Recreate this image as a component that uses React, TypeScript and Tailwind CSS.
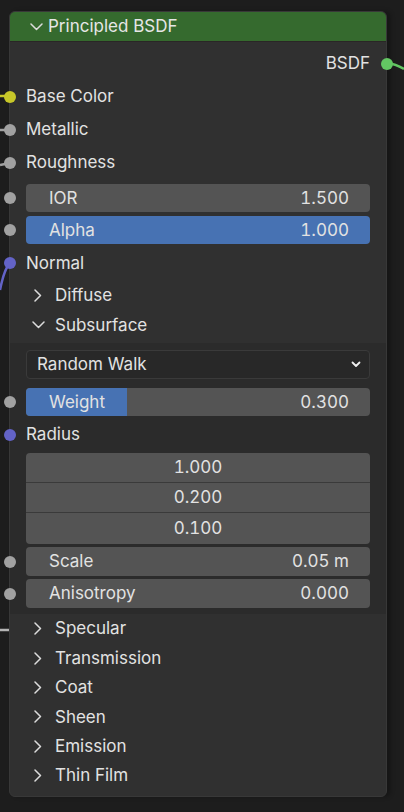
import React from "react";

const SOCKET = {
  yellow: "bg-[#c7c729]",
  gray: "bg-[#a1a1a1]",
  purple: "bg-[#6363c7]",
  green: "bg-[#63c763]",
};

function Socket({ color, side = "left" }: { color: string; side?: "left" | "right" }) {
  return (
    <span
      className={`absolute top-1/2 -translate-y-1/2 w-[12px] h-[12px] rounded-full ${color} ${side === "left" ? "left-[-6px]" : "right-[-7px]"}`}
    />
  );
}

function ChevronDown({ className = "" }: { className?: string }) {
  return (
    <svg width="13" height="8" viewBox="0 0 13 8" className={`shrink-0 ${className}`}>
      <polyline points="1,1 6.5,6.5 12,1" fill="none" stroke="#dcdcdc" strokeWidth="1.5" strokeLinecap="round" strokeLinejoin="round" />
    </svg>
  );
}

function ChevronRight() {
  return (
    <svg width="8" height="13" viewBox="0 0 8 13" className="shrink-0">
      <polyline points="1,1 6.5,6.5 1,12" fill="none" stroke="#dcdcdc" strokeWidth="1.5" strokeLinecap="round" strokeLinejoin="round" />
    </svg>
  );
}

function SocketRow({ label, color }: { label: string; color: string }) {
  return (
    <div className="relative h-[33px] flex items-center px-[16px] pt-[1px]">
      <Socket color={color} />
      <span>{label}</span>
    </div>
  );
}

function Field({ label, value, socket, active }: { label: string; value: string; socket?: string; active?: boolean }) {
  return (
    <div className="relative px-[16px]">
      {socket && <Socket color={socket} />}
      <div className={`h-[28px] rounded-[4px] flex items-center justify-between pl-[23px] pr-[21px] pt-[1px] ${active ? "bg-[#4772b3]" : "bg-[#545454]"}`}>
        <span>{label}</span>
        <span className="tabular-nums">{value}</span>
      </div>
    </div>
  );
}

function PanelHeader({ label, open, h = "h-[29.4px]" }: { label: string; open?: boolean; h?: string }) {
  return (
    <div className={`${h} flex items-center pl-[24px]`}>
      <span className="w-[8px] flex justify-center">{open ? <ChevronDown /> : <ChevronRight />}</span>
      <span className="ml-[13px] pt-[1px]">{label}</span>
    </div>
  );
}

export default function App() {
  const closedPanels = ["Specular", "Transmission", "Coat", "Sheen", "Emission", "Thin Film"];

  return (
    <div className="relative w-[404px] h-[812px] bg-[#1d1d1d] overflow-hidden pt-[11px] pl-[9px] font-['Inter','Noto_Sans',sans-serif] text-[17px] text-[#e2e2e2]">
      {/* wires */}
      <svg className="absolute inset-0" width="404" height="812">
        <line x1="0" y1="96" x2="10" y2="96" stroke="#c7c729" strokeWidth="2.5" />
        <line x1="0" y1="130" x2="10" y2="130" stroke="#a1a1a1" strokeWidth="2.5" />
        <path d="M0 165 L10 163" stroke="#a1a1a1" strokeWidth="2.5" fill="none" />
        <path d="M10 263 C 6 267, 3 275, 0 290" stroke="#6363c7" strokeWidth="2.5" fill="none" />
        <line x1="0" y1="630" x2="10" y2="630" stroke="#b4b4b4" strokeWidth="2.5" />
        <path d="M387 63 C 394 64, 399 66, 404 69" stroke="#63c763" strokeWidth="2.5" fill="none" />
      </svg>

      <div className="relative w-[378px] rounded-[6px] bg-[#303030] border border-[#383838] shadow-[4px_0_4px_rgba(0,0,0,0.25)]">
        {/* header */}
        <div className="h-[30px] rounded-t-[5px] bg-[#356a2e] border-b border-[#2a2626] flex items-center pl-[20px]">
          <ChevronDown />
          <span className="ml-[5px] pt-[1px] text-[#e6e6e6]">Principled BSDF</span>
        </div>

        <div className="pt-[5px]">
          <div className="relative h-[33px] flex items-center justify-end px-[16px] pt-[1px]">
            <span>BSDF</span>
            <Socket color={SOCKET.green} side="right" />
          </div>
          <SocketRow label="Base Color" color={SOCKET.yellow} />
          <SocketRow label="Metallic" color={SOCKET.gray} />
          <SocketRow label="Roughness" color={SOCKET.gray} />

          <div className="mt-[5px]">
            <Field label="IOR" value="1.500" socket={SOCKET.gray} />
          </div>
          <div className="mt-[4px]">
            <Field label="Alpha" value="1.000" socket={SOCKET.gray} active />
          </div>

          <div className="relative mt-[2px] h-[34px] flex items-center px-[16px] pt-[1px]">
            <Socket color={SOCKET.purple} />
            <span>Normal</span>
          </div>

          <PanelHeader label="Diffuse" h="h-[30px]" />
          <div className="mb-[3px]">
            <PanelHeader label="Subsurface" open h="h-[30px]" />
          </div>

          {/* subsurface panel */}
          <div className="bg-[#2b2b2b] pt-[7px] pb-[6px]">
            <div className="px-[16px]">
              <div className="h-[29px] rounded-[4px] bg-[#282828] border border-[#3a3a3a] flex items-center justify-between pl-[10px] pr-[8px]">
                <span className="pt-[1px]">Random Walk</span>
                <svg width="10" height="7" viewBox="0 0 10 7">
                  <polyline points="1.5,1.5 5,5 8.5,1.5" fill="none" stroke="#f0f0f0" strokeWidth="1.8" strokeLinecap="round" strokeLinejoin="round" />
                </svg>
              </div>
            </div>

            <div className="relative px-[16px] mt-[9px]">
              <Socket color={SOCKET.gray} />
              <div className="relative h-[28px] rounded-[4px] bg-[#545454] overflow-hidden flex items-center justify-between pl-[23px] pr-[21px] pt-[1px]">
                <div className="absolute left-0 top-0 bottom-0 w-[101px] bg-[#4772b3]" />
                <span className="relative">Weight</span>
                <span className="relative tabular-nums">0.300</span>
              </div>
            </div>

            <div className="relative h-[37px] flex items-center px-[16px] pt-[1px]">
              <Socket color={SOCKET.purple} />
              <span>Radius</span>
            </div>

            <div className="px-[16px]">
              <div className="rounded-[4px] bg-[#545454] overflow-hidden flex flex-col tabular-nums">
                <div className="h-[30px] flex items-center justify-center border-b border-[#3a3a3a] pt-[1px]">1.000</div>
                <div className="h-[30px] flex items-center justify-center border-b border-[#3a3a3a] pt-[1px]">0.200</div>
                <div className="h-[31px] flex items-center justify-center pt-[1px]">0.100</div>
              </div>
            </div>

            <div className="relative px-[16px] mt-[3px]">
              <Socket color={SOCKET.gray} />
              <div className="h-[29px] rounded-[4px] bg-[#545454] flex items-center justify-between pl-[23px] pr-[21px] pt-[1px]">
                <span>Scale</span>
                <span className="tabular-nums">0.05 m</span>
              </div>
            </div>
            <div className="relative px-[16px] mt-[3px]">
              <Socket color={SOCKET.gray} />
              <div className="h-[29px] rounded-[4px] bg-[#545454] flex items-center justify-between pl-[23px] pr-[21px] pt-[1px]">
                <span>Anisotropy</span>
                <span className="tabular-nums">0.000</span>
              </div>
            </div>
          </div>

          <div className="pb-[6px]">
            {closedPanels.map((p) => (
              <PanelHeader key={p} label={p} />
            ))}
          </div>
        </div>
      </div>
    </div>
  );
}
